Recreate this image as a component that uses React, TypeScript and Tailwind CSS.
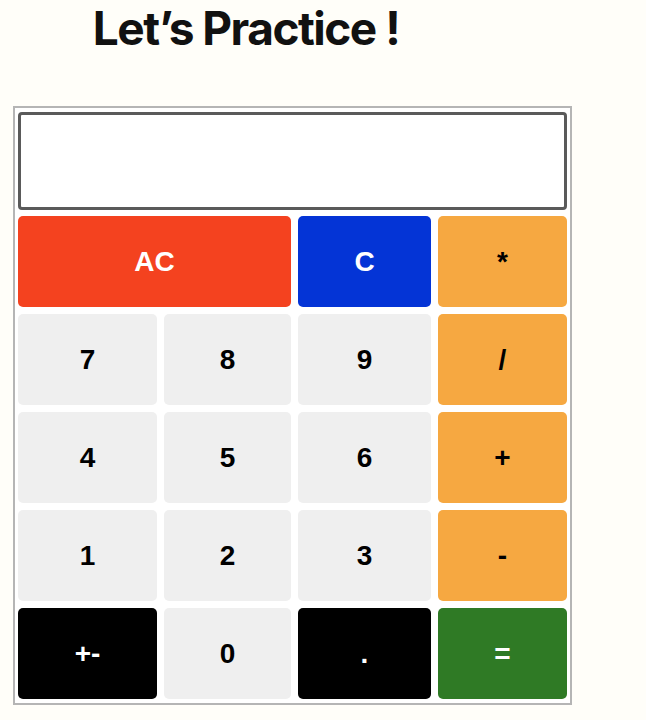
import React from "react";

type Key = { label: string; cls: string; span?: boolean };

const keys: Key[] = [
  { label: "AC", cls: "bg-[#f4421f] text-white", span: true },
  { label: "C", cls: "bg-[#0434d6] text-white" },
  { label: "*", cls: "bg-[#f6a841] text-black" },
  { label: "7", cls: "bg-[#efefef] text-black" },
  { label: "8", cls: "bg-[#efefef] text-black" },
  { label: "9", cls: "bg-[#efefef] text-black" },
  { label: "/", cls: "bg-[#f6a841] text-black" },
  { label: "4", cls: "bg-[#efefef] text-black" },
  { label: "5", cls: "bg-[#efefef] text-black" },
  { label: "6", cls: "bg-[#efefef] text-black" },
  { label: "+", cls: "bg-[#f6a841] text-black" },
  { label: "1", cls: "bg-[#efefef] text-black" },
  { label: "2", cls: "bg-[#efefef] text-black" },
  { label: "3", cls: "bg-[#efefef] text-black" },
  { label: "-", cls: "bg-[#f6a841] text-black" },
  { label: "+-", cls: "bg-black text-white" },
  { label: "0", cls: "bg-[#efefef] text-black" },
  { label: ".", cls: "bg-black text-white" },
  { label: "=", cls: "bg-[#2f7a25] text-white" },
];

export default function App() {
  return (
    <div className="w-[646px] h-[720px] bg-[#fffef9] overflow-hidden">
      <div className="pt-[2px]">
        <h1 className="ml-[46px] w-[400px] text-center font-['Inter',sans-serif] font-bold text-[46px] leading-[52px] tracking-[-1.5px] text-[#111]">
          Let’s Practice !
        </h1>
      </div>

      <div className="mt-[52px] ml-[13px] w-[559px] border-2 border-[#b5b5b5] bg-white px-[3px] pt-[4px] pb-[4px]">
        <div className="h-[98px] rounded-[4px] border-[3px] border-[#5a5a5a] bg-white" />
        <div className="mt-[6px] grid grid-cols-[139px_127px_133px_129px] auto-rows-[91px] gap-[7px] font-['Liberation_Sans',Arial,sans-serif] font-bold text-[28px]">
          {keys.map((k) => (
            <div
              key={k.label}
              className={`flex items-center justify-center rounded-[5px] ${k.cls} ${k.span ? "col-span-2" : ""}`}
            >
              {k.label}
            </div>
          ))}
        </div>
      </div>
    </div>
  );
}
